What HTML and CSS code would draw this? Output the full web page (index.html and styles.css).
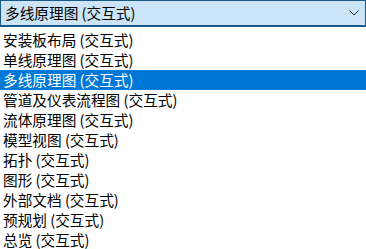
FILE: index.html
```html
<!DOCTYPE html>
<html lang="zh-CN">
<head>
<meta charset="utf-8">
<link rel="stylesheet" href="styles.css">
</head>
<body>
<div class="combo">
  <div class="combo-box">
    <span class="combo-value">多线原理图 (交互式)</span>
    <svg class="chevron" width="10" height="6" viewBox="0 0 10 6"><path d="M0.5 0.5 L5 5 L9.5 0.5" fill="none" stroke="#333" stroke-width="1"/></svg>
  </div>
  <ul class="list">
    <li class="item">安装板布局 (交互式)</li>
    <li class="item">单线原理图 (交互式)</li>
    <li class="item selected">多线原理图 (交互式)</li>
    <li class="item">管道及仪表流程图 (交互式)</li>
    <li class="item">流体原理图 (交互式)</li>
    <li class="item">模型视图 (交互式)</li>
    <li class="item">拓扑 (交互式)</li>
    <li class="item">图形 (交互式)</li>
    <li class="item">外部文档 (交互式)</li>
    <li class="item">预规划 (交互式)</li>
    <li class="item">总览 (交互式)</li>
  </ul>
</div>
</body>
</html>
```
FILE: styles.css
```css
html, body {
  margin: 0;
  padding: 0;
  background: #ffffff;
  width: 366px;
  height: 249px;
  overflow: hidden;
}
body {
  font-family: "Noto Sans CJK SC", "Noto Sans", sans-serif;
  font-size: 14.67px;
  color: #000000;
}
.combo {
  display: flex;
  flex-direction: column;
}
.combo-box {
  box-sizing: border-box;
  height: 27px;
  border: 1px solid #1b5a86;
  border-bottom-width: 2px;
  background: #cce4f7;
  display: flex;
  align-items: center;
  justify-content: space-between;
  padding: 0 4px 0 4px;
}
.combo-value {
  line-height: 20px;
}
.chevron {
  display: block;
  margin-right: 2px;
}
.list {
  list-style: none;
  margin: 3px 0 0 0;
  padding: 0;
}
.item {
  height: 20px;
  line-height: 20px;
  padding-left: 3px;
  white-space: nowrap;
}
.item.selected {
  background: #0078d7;
  color: #ffffff;
}
```
